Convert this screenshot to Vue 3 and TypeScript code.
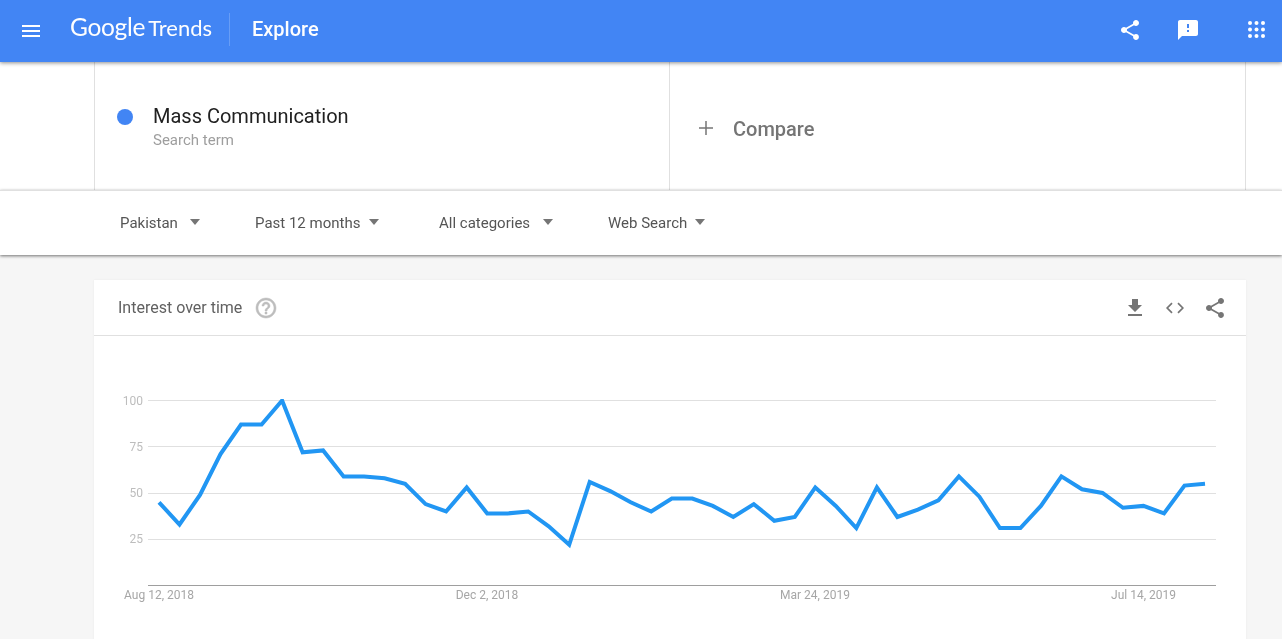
<script setup lang="ts">
import { computed } from 'vue'

const values: number[] = [45,33,49,71,87,87,100,72,73,59,59,58,55,44,40,53,39,39,40,32,22,56,51,45,40,47,47,43,37,44,35,37,53,43,31,53,37,41,46,59,48,31,31,43,59,52,50,42,43,39,54,55]
const yOf = (v: number): number => 585.5 - v * 1.85
const points = computed(() => values.map((v, i) => `${(159 + i * 20.51).toFixed(1)},${yOf(v).toFixed(1)}`).join(' '))
const ticks = [100, 75, 50, 25]
const dates = [
  { x: 159, label: 'Aug 12, 2018' },
  { x: 487, label: 'Dec 2, 2018' },
  { x: 815, label: 'Mar 24, 2019' },
  { x: 1143.5, label: 'Jul 14, 2019' },
]
const filters = ['Pakistan', 'Past 12 months', 'All categories', 'Web Search']
const dots = [0, 1, 2].flatMap((r) => [0, 1, 2].map((c) => ({ cx: 2 + c * 6.5, cy: 2 + r * 6.5 })))
const sharePath = 'M18 16.08c-.76 0-1.44.3-1.96.77L8.91 12.7c.05-.23.09-.46.09-.7s-.04-.47-.09-.7l7.05-4.11c.54.5 1.25.81 2.04.81 1.66 0 3-1.34 3-3s-1.34-3-3-3-3 1.34-3 3c0 .24.04.47.09.7L8.04 9.81C7.5 9.31 6.79 9 6 9c-1.66 0-3 1.34-3 3s1.34 3 3 3c.79 0 1.5-.31 2.04-.81l7.12 4.16c-.05.21-.08.43-.08.65 0 1.61 1.31 2.92 2.92 2.92 1.61 0 2.92-1.31 2.92-2.92s-1.31-2.92-2.92-2.92z'
</script>

<template>
  <div class="page">
    <header class="topbar">
      <svg class="menu" viewBox="0 0 24 24" width="24" height="24"><path fill="#fff" d="M3 18h18v-2H3v2zm0-5h18v-2H3v2zm0-7v2h18V6H3z" /></svg>
      <div class="logo"><span class="logo-g">Google</span><span class="logo-t">Trends</span></div>
      <div class="divider"></div>
      <div class="title">Explore</div>
      <div class="top-actions">
        <svg viewBox="0 0 24 24" width="24" height="24"><path fill="#fff" :d="sharePath" /></svg>
        <svg class="feedback" viewBox="0 0 24 24" width="24" height="24"><path fill="#fff" d="M20 2H4c-1.1 0-1.99.9-1.99 2L2 22l4-4h14c1.1 0 2-.9 2-2V4c0-1.1-.9-2-2-2zm-7 12h-2v-2h2v2zm0-4h-2V6h2v4z" /></svg>
        <svg viewBox="0 0 17 17" width="17" height="17"><circle v-for="(d, i) in dots" :key="i" :cx="d.cx" :cy="d.cy" r="2" fill="#fff" /></svg>
      </div>
    </header>

    <section class="terms">
      <div class="term">
        <span class="dot"></span>
        <div class="term-text">
          <div class="term-name">Mass Communication</div>
          <div class="term-sub">Search term</div>
        </div>
      </div>
      <div class="compare">
        <svg viewBox="0 0 16 16" width="16" height="16"><path fill="#757575" d="M7.25 1h1.5v6.25H15v1.5H8.75V15h-1.5V8.75H1v-1.5h6.25z" /></svg>
        <span>Compare</span>
      </div>
    </section>

    <section class="filters">
      <div v-for="f in filters" :key="f" class="filter">
        <span>{{ f }}</span>
        <i class="caret"></i>
      </div>
    </section>

    <main class="content">
      <article class="card">
        <div class="card-head">
          <span class="card-title">Interest over time</span>
          <svg class="help" viewBox="0 0 24 24" width="24" height="24"><path fill="#bdbdbd" stroke="#bdbdbd" stroke-width="0.5" d="M11 18h2v-2h-2v2zm1-16C6.48 2 2 6.48 2 12s4.48 10 10 10 10-4.48 10-10S17.52 2 12 2zm0 18c-4.41 0-8-3.59-8-8s3.59-8 8-8 8 3.59 8 8-3.59 8-8 8zm0-14c-2.21 0-4 1.79-4 4h2c0-1.1.9-2 2-2s2 .9 2 2c0 2-3 1.75-3 5h2c0-2.25 3-2.5 3-5 0-2.21-1.79-4-4-4z" /></svg>
          <div class="card-actions">
            <svg viewBox="0 0 24 24" width="24" height="24"><path fill="#757575" d="M19 9h-4V3H9v6H5l7 7 7-7zM5 18v2h14v-2H5z" /></svg>
            <svg viewBox="0 0 24 24" width="24" height="24"><path fill="none" stroke="#757575" stroke-width="1.7" d="M9 7.2 4.2 12 9 16.8M15 7.2l4.8 4.8-4.8 4.8" /></svg>
            <svg viewBox="0 0 24 24" width="24" height="24"><path fill="#757575" :d="sharePath" /></svg>
          </div>
        </div>
        <svg class="chart" viewBox="94 336 1152 303" width="1152" height="303">
          <defs>
            <clipPath id="plot"><rect x="148" y="399" width="1068" height="186" /></clipPath>
          </defs>
          <g v-for="t in ticks" :key="t">
            <line x1="148" x2="1216" :y1="Math.floor(yOf(t)) + 0.5" :y2="Math.floor(yOf(t)) + 0.5" stroke="#e0e0e0" />
            <text x="143" :y="yOf(t) + 4" text-anchor="end" class="tick">{{ t }}</text>
          </g>
          <line x1="148" x2="1216" y1="585.5" y2="585.5" stroke="#9e9e9e" />
          <polyline :points="points" fill="none" stroke="#2196f3" stroke-width="4" stroke-linejoin="miter" clip-path="url(#plot)" />
          <text v-for="d in dates" :key="d.label" :x="d.x" y="599" text-anchor="middle" class="date">{{ d.label }}</text>
        </svg>
      </article>
    </main>
  </div>
</template>

<style>
html, body { margin: 0; overflow: hidden; background: #f6f6f6; }
</style>

<style scoped>
.page {
  height: 639px;
  overflow: hidden;
  display: flex;
  flex-direction: column;
  font-family: Roboto, "Liberation Sans", sans-serif;
  background: #f6f6f6;
}
.logo, .title, .term-text, .compare span, .filter span, .card-title, .chart text {
  opacity: 0.999;
  will-change: opacity;
}
.topbar {
  position: relative;
  z-index: 3;
  flex: none;
  height: 62px;
  display: flex;
  align-items: center;
  background: #4285f4;
  box-shadow: 0 1px 4px rgba(0, 0, 0, 0.45);
  color: #fff;
  padding-left: 19px;
  box-sizing: border-box;
}
.menu { flex: none; margin-top: -1px; }
.logo {
  display: flex;
  align-items: baseline;
  gap: 3px;
  margin-left: 27px;
  margin-top: -9px;
  width: 142px;
  font-family: Lato, Roboto, sans-serif;
  white-space: nowrap;
}
.logo-g { font-size: 24.5px; letter-spacing: -0.3px; }
.logo-t { font-size: 22px; letter-spacing: 0; font-weight: 400; }
.divider {
  width: 1px;
  height: 33px;
  margin: -3px 0 0 17px;
  background: rgba(255, 255, 255, 0.2);
}
.title {
  margin-left: 22px;
  font-size: 20px;
  font-weight: 500;
  margin-top: -5px;
}
.top-actions {
  margin-left: auto;
  display: flex;
  align-items: center;
  gap: 34px;
  padding-right: 17px;
  margin-top: -3px;
}
.feedback { margin-right: 14px; }
.terms {
  flex: none;
  height: 128px;
  display: flex;
  padding-left: 94px;
  background: #fff;
}
.term {
  width: 575px;
  box-sizing: border-box;
  border-left: 1px solid #e0e0e0;
  display: flex;
  align-items: center;
  padding-left: 22px;
}
.dot {
  width: 16px;
  height: 16px;
  border-radius: 50%;
  background: #4285f4;
  margin-top: -18px;
}
.term-text { margin-left: 20px; margin-top: 0; }
.term-name { font-size: 20px; line-height: 26px; color: #212121; }
.term-sub { font-size: 15px; line-height: 20px; color: #9e9e9e; margin-top: 1px; }
.compare {
  width: 577px;
  box-sizing: border-box;
  border-left: 1px solid #e0e0e0;
  border-right: 1px solid #e0e0e0;
  display: flex;
  align-items: center;
  padding-left: 28px;
  padding-top: 4px;
  color: #757575;
  font-size: 20px;
  font-weight: 500;
}
.compare span { margin-left: 19px; margin-top: 1px; }
.filters {
  position: relative;
  z-index: 2;
  flex: none;
  box-sizing: border-box;
  height: 65px;
  border-top: 1px solid #e0e0e0;
  display: flex;
  align-items: center;
  padding-left: 120px;
  padding-bottom: 1px;
  background: #fff;
  box-shadow: 0 1px 3px rgba(0, 0, 0, 0.55);
  font-size: 15px;
  color: #555;
}
.filter { display: flex; align-items: center; }
.filter:nth-child(1) { width: 135px; gap: 12px; }
.filter:nth-child(2) { width: 184px; gap: 9px; }
.filter:nth-child(3) { width: 169px; gap: 13px; }
.filter:nth-child(4) { gap: 8px; }
.caret {
  width: 0;
  height: 0;
  border-left: 5.5px solid transparent;
  border-right: 5.5px solid transparent;
  border-top: 6px solid #757575;
  margin-top: -1px;
}
.content {
  flex: 1;
  padding: 25px 36px 0 94px;
  min-height: 0;
}
.card {
  width: 1152px;
  height: 400px;
  background: #fff;
  box-shadow: 0 0 2px rgba(0, 0, 0, 0.06);
}
.card-head {
  box-sizing: border-box;
  height: 56px;
  border-bottom: 1px solid #e0e0e0;
  display: flex;
  align-items: center;
  padding: 0 19px 0 24px;
}
.card-title { font-size: 16px; color: #616161; }
.help { margin-left: 12px; }
.card-actions {
  margin-left: auto;
  display: flex;
  gap: 16px;
}
.chart { display: block; }
.tick { font-size: 12px; fill: #bdbdbd; font-family: Roboto, sans-serif; }
.date { font-size: 12px; fill: #a6a6a6; font-family: Roboto, sans-serif; }
</style>
